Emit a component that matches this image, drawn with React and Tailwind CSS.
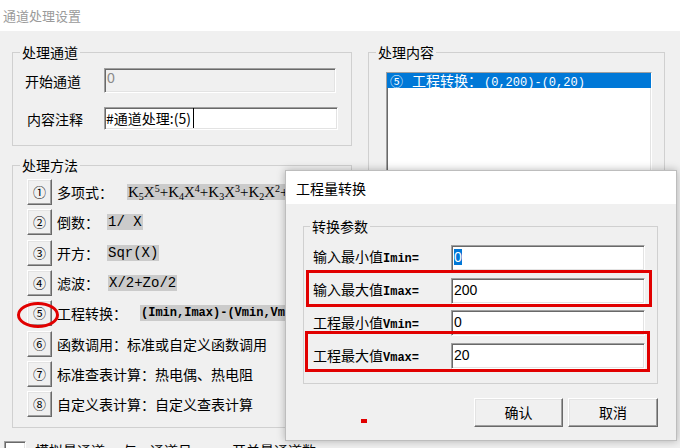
import React from "react";

const sunken = "border border-t-[#a0a0a0] border-l-[#a0a0a0] border-r-white border-b-white shadow-[inset_1px_1px_0_#696969,inset_-1px_-1px_0_#e3e3e3]";
const raised = "bg-[#f0f0f0] border border-t-white border-l-white border-r-[#696969] border-b-[#696969] shadow-[inset_-1px_-1px_0_#a0a0a0,inset_1px_1px_0_#e3e3e3]";
const mono = "font-['Liberation_Mono','Noto_Sans_CJK_SC',monospace]";

function Formula({ children, className = "" }) {
    return <span className={`bg-[#cbcbcb] h-[16px] leading-[16px] px-[1px] whitespace-nowrap overflow-hidden ${className}`}>{children}</span>;
}

const methods = [
    {
        n: "①", label: "多项式：", lw: "w-[70px]",
        body: (<Formula className="font-['Liberation_Serif',serif] text-[15px] w-[158px]">
            K<sub className="text-[10px]">5</sub>X<sup className="text-[10px]">5</sup>+K<sub className="text-[10px]">4</sub>X<sup className="text-[10px]">4</sup>+K<sub className="text-[10px]">3</sub>X<sup className="text-[10px]">3</sup>+K<sub className="text-[10px]">2</sub>X<sup className="text-[10px]">2</sup>+K<sub className="text-[10px]">1</sub>X+K<sub className="text-[10px]">0</sub>
        </Formula>),
    },
    { n: "②", label: "倒数：", lw: "w-[50px]", body: <Formula className={`${mono} text-[14px]`}>1/ X</Formula> },
    { n: "③", label: "开方：", lw: "w-[50px]", body: <Formula className={`${mono} text-[14px]`}>Sqr(X)</Formula> },
    { n: "④", label: "滤波：", lw: "w-[51px]", body: <Formula className={`${mono} text-[14px]`}>X/2+Zo/2</Formula> },
    { n: "⑤", label: "工程转换：", lw: "w-[83px]", body: <Formula className={`${mono} text-[12px] font-bold w-[145px]`}>(Imin,Imax)-(Vmin,Vmax)</Formula> },
    { n: "⑥", label: "函数调用：标准或自定义函数调用" },
    { n: "⑦", label: "标准查表计算：热电偶、热电阻" },
    { n: "⑧", label: "自定义表计算：自定义查表计算" },
];

const params = [
    { cjk: "输入最小值", lat: "Imin=", value: <span className="bg-[#0078d7] text-white">0</span> },
    { cjk: "输入最大值", lat: "Imax=", value: "200" },
    { cjk: "工程最小值", lat: "Vmin=", value: "0" },
    { cjk: "工程最大值", lat: "Vmax=", value: "20" },
];

export default function App() {
    return (<div className="relative w-[680px] h-[448px] overflow-hidden bg-[#f0f0f0] text-[14px] leading-[18px] text-black font-['Noto_Sans_CJK_SC',sans-serif]">
        <div className="h-[31px] bg-white flex items-center pl-[3px] text-[13px] text-[#9a9a9a]">通道处理设置</div>

        <div className="flex px-[12px] pt-[12px] gap-[16px]">
            <div className="w-[340px]">
                <fieldset className="border border-[#d0d0d0]">
                    <legend className="ml-[7px] px-[2px]">处理通道</legend>
                    <div className="pl-[12px] pt-[7px] pb-[15px]">
                        <div className="flex items-center h-[25px]">
                            <span className="w-[79px]">开始通道</span>
                            <div className={`w-[232px] h-[25px] bg-[#f0f0f0] pl-[2px] text-[#8a8a8a] font-['Liberation_Sans',sans-serif] ${sunken}`}>0</div>
                        </div>
                        <div className="flex items-center h-[23px] mt-[14px]">
                            <span className="w-[79px] pl-[2px]">内容注释</span>
                            <div className={`w-[234px] h-[23px] bg-white pl-[1px] leading-[20px] ${sunken}`}>#通道处理:(5)<span className="ml-[2px] border-l border-black">&nbsp;</span></div>
                        </div>
                    </div>
                </fieldset>

                <fieldset className="border border-[#d0d0d0] mt-[10px]">
                    <legend className="ml-[7px] px-[2px]">处理方法</legend>
                    <div className="pl-[14px] pt-[3px] pb-[8px]">
                        {methods.map((m) => (<div key={m.n} className="flex items-center h-[30.3px]">
                            <button className={`w-[25px] h-[26px] flex items-center justify-center text-[13px] ${raised}`}>{m.n}</button>
                            <span className={`ml-[5px] whitespace-nowrap ${m.lw || ""}`}>{m.label}</span>
                            {m.body}
                        </div>))}
                    </div>
                </fieldset>
            </div>

            <div className="w-[297px]">
                <fieldset className="border border-[#d0d0d0] h-[385px]">
                    <legend className="ml-[7px] px-[2px]">处理内容</legend>
                    <div className="pl-[17px] pt-[11px]">
                        <div className={`w-[266px] h-[340px] bg-white ${sunken}`}>
                            <div className="h-[15px] bg-[#0078d7] text-white leading-[15px] pl-[3px] whitespace-nowrap">
                                <span className="text-[13px]">⑤</span>
                                <span className="ml-[9px]">工程转换：</span>
                                <span className={`${mono} text-[12px] ml-[2px]`}>(0,200)-(0,20)</span>
                            </div>
                        </div>
                    </div>
                </fieldset>
            </div>
        </div>

        <div className="flex items-start pt-[13px] text-[14px] whitespace-nowrap">
            <div className={`ml-[4px] w-[22px] h-[14px] bg-white ${sunken}`} />
            <span className="ml-[9px]">模拟量通道</span>
            <span className="ml-[18px]">与</span>
            <span className="ml-[13px]">通道号</span>
            <span className="ml-[40px]">开关量通道数</span>
        </div>

        {/* red mark around button 5 */}
        <div className="absolute left-[17px] top-[302px] w-[42px] h-[26px] rounded-[50%] border-[3px] border-[#e10000]" />

        {/* dialog */}
        <div className="absolute left-[285px] top-[170px] w-[392px] h-[271px] bg-[#f0f0f0] border border-[#bdbdbd] shadow-[0_0_8px_rgba(0,0,0,0.28)]">
            <div className="h-[33px] bg-white flex items-center pl-[10px]">工程量转换</div>
            <fieldset className="border border-[#d0d0d0] ml-[17px] mt-[13px] w-[355px]">
                <legend className="ml-[6px] px-[2px]">转换参数</legend>
                <div className="pl-[9px] pt-[6.6px] pb-[10.6px]">
                    {params.map((p) => (<div key={p.lat} className="flex items-center h-[32.7px]">
                        <span className="w-[138px] whitespace-nowrap">{p.cjk}<span className={`${mono} text-[12px] font-bold`}>{p.lat}</span></span>
                        <div className={`w-[194px] h-[26px] bg-white pl-[2px] leading-[22px] font-['Liberation_Sans',sans-serif] ${sunken}`}>{p.value}</div>
                    </div>))}
                </div>
            </fieldset>
            <div className="flex justify-end gap-[5px] pr-[18px] mt-[14px]">
                <button className={`w-[89px] h-[29px] ${raised}`}>确认</button>
                <button className={`w-[90px] h-[29px] ${raised}`}>取消</button>
            </div>

            <div className="absolute left-[20px] top-[99px] w-[346px] h-[37px] border-[3px] border-[#e10000]" />
            <div className="absolute left-[19px] top-[160px] w-[345px] h-[41px] border-[3px] border-[#e10000]" />
            <div className="absolute left-[75px] top-[248px] w-[6px] h-[4px] bg-[#e10000]" />
        </div>
    </div>);
}
